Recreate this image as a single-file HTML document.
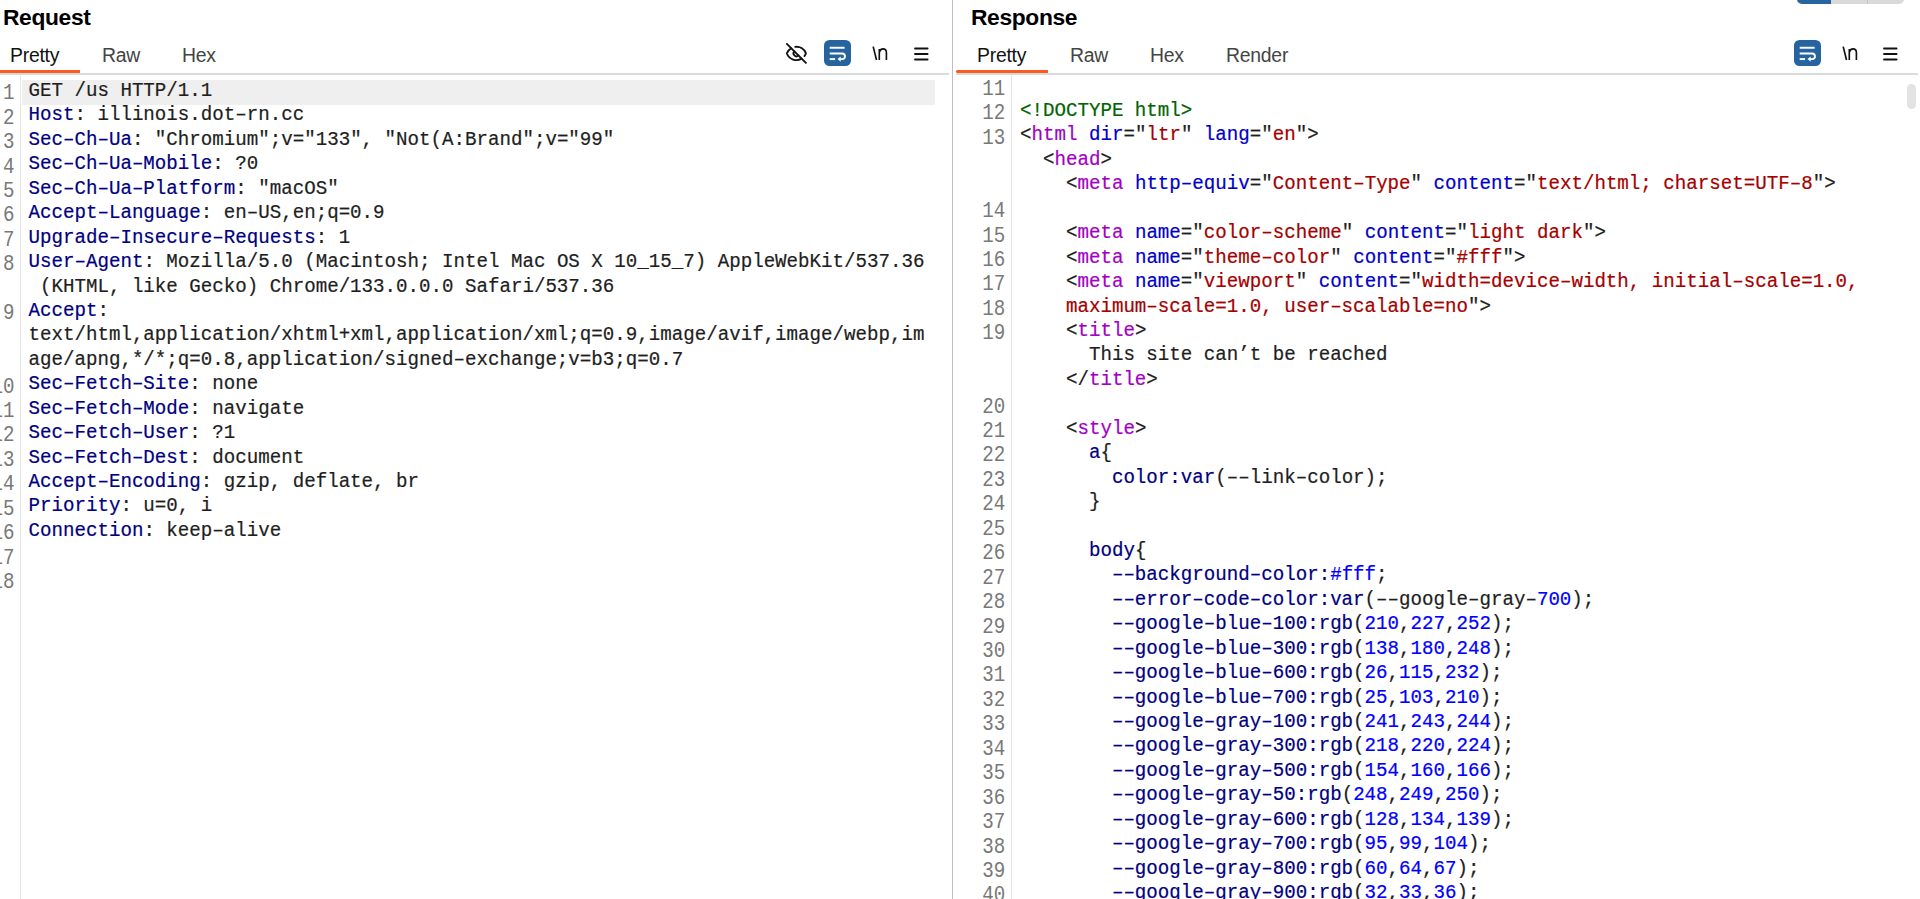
<!DOCTYPE html><html><head><meta charset="utf-8"><style>

html,body{margin:0;padding:0;}
body{width:1920px;height:899px;overflow:hidden;position:relative;background:#fff;}
.abs{position:absolute;}
.row{position:absolute;white-space:pre;transform:scaleY(1.1);transform-origin:0 17.32px;font-family:"Liberation Mono",monospace;font-size:19.15px;line-height:24.44px;height:24.44px;color:#1e1e1e;-webkit-text-stroke:0.2px currentColor;}
.num{position:absolute;white-space:pre;transform:scaleY(1.16);transform-origin:0 17.32px;font-family:"Liberation Mono",monospace;font-size:19.15px;line-height:24.44px;height:24.44px;color:#787878;text-align:right;}
.k{color:#000080;} .t{color:#a300c4;} .a{color:#0000c8;} .v{color:#a50000;} .g{color:#006400;} .n{color:#0000ff;}
.ui{font-family:"Liberation Sans",sans-serif;position:absolute;white-space:pre;}
.title{font-weight:bold;font-size:22.8px;letter-spacing:-0.35px;color:#000;}
.tab{font-size:19.4px;letter-spacing:-0.25px;color:#444;}
.tab.sel{color:#111;}

</style></head><body>
<div class="ui title" style="left:3px;top:4.1px;">Request</div>
<div class="ui tab sel" style="left:10px;top:44px;">Pretty</div>
<div class="ui tab" style="left:102px;top:44px;">Raw</div>
<div class="ui tab" style="left:182px;top:44px;">Hex</div>
<div class="abs" style="left:0;top:73px;width:949px;height:2px;background:#d9dcdd;"></div>
<div class="abs" style="left:0;top:70px;width:80px;height:3px;background:#ff5a1e;"></div>
<div class="abs" style="left:20px;top:75px;width:1px;height:824px;background:#e6e6e6;"></div>
<div class="abs" style="left:22px;top:80px;width:913px;height:24.5px;background:#efefef;"></div>
<div class="row" style="left:28.5px;top:78.98px;">GET /us HTTP/1.1</div>
<div class="row" style="left:28.5px;top:103.42px;"><span class="k">Host</span>: illinois.dot–rn.cc</div>
<div class="row" style="left:28.5px;top:127.86px;"><span class="k">Sec–Ch–Ua</span>: "Chromium";v="133", "Not(A:Brand";v="99"</div>
<div class="row" style="left:28.5px;top:152.30px;"><span class="k">Sec–Ch–Ua–Mobile</span>: ?0</div>
<div class="row" style="left:28.5px;top:176.74px;"><span class="k">Sec–Ch–Ua–Platform</span>: "macOS"</div>
<div class="row" style="left:28.5px;top:201.18px;"><span class="k">Accept–Language</span>: en–US,en;q=0.9</div>
<div class="row" style="left:28.5px;top:225.62px;"><span class="k">Upgrade–Insecure–Requests</span>: 1</div>
<div class="row" style="left:28.5px;top:250.06px;"><span class="k">User–Agent</span>: Mozilla/5.0 (Macintosh; Intel Mac OS X 10_15_7) AppleWebKit/537.36</div>
<div class="row" style="left:28.5px;top:274.50px;"> (KHTML, like Gecko) Chrome/133.0.0.0 Safari/537.36</div>
<div class="row" style="left:28.5px;top:298.94px;"><span class="k">Accept</span>:</div>
<div class="row" style="left:28.5px;top:323.38px;">text/html,application/xhtml+xml,application/xml;q=0.9,image/avif,image/webp,im</div>
<div class="row" style="left:28.5px;top:347.82px;">age/apng,*/*;q=0.8,application/signed–exchange;v=b3;q=0.7</div>
<div class="row" style="left:28.5px;top:372.26px;"><span class="k">Sec–Fetch–Site</span>: none</div>
<div class="row" style="left:28.5px;top:396.70px;"><span class="k">Sec–Fetch–Mode</span>: navigate</div>
<div class="row" style="left:28.5px;top:421.14px;"><span class="k">Sec–Fetch–User</span>: ?1</div>
<div class="row" style="left:28.5px;top:445.58px;"><span class="k">Sec–Fetch–Dest</span>: document</div>
<div class="row" style="left:28.5px;top:470.02px;"><span class="k">Accept–Encoding</span>: gzip, deflate, br</div>
<div class="row" style="left:28.5px;top:494.46px;"><span class="k">Priority</span>: u=0, i</div>
<div class="row" style="left:28.5px;top:518.90px;"><span class="k">Connection</span>: keep–alive</div>
<div class="num" style="right:1905.5px;top:82.28px;">1</div>
<div class="num" style="right:1905.5px;top:106.72px;">2</div>
<div class="num" style="right:1905.5px;top:131.16px;">3</div>
<div class="num" style="right:1905.5px;top:155.60px;">4</div>
<div class="num" style="right:1905.5px;top:180.04px;">5</div>
<div class="num" style="right:1905.5px;top:204.48px;">6</div>
<div class="num" style="right:1905.5px;top:228.92px;">7</div>
<div class="num" style="right:1905.5px;top:253.36px;">8</div>
<div class="num" style="right:1905.5px;top:302.24px;">9</div>
<div class="num" style="right:1905.5px;top:375.56px;">10</div>
<div class="num" style="right:1905.5px;top:400.00px;">11</div>
<div class="num" style="right:1905.5px;top:424.44px;">12</div>
<div class="num" style="right:1905.5px;top:448.88px;">13</div>
<div class="num" style="right:1905.5px;top:473.32px;">14</div>
<div class="num" style="right:1905.5px;top:497.76px;">15</div>
<div class="num" style="right:1905.5px;top:522.20px;">16</div>
<div class="num" style="right:1905.5px;top:546.64px;">17</div>
<div class="num" style="right:1905.5px;top:571.08px;">18</div>
<div class="abs" style="left:951.7px;top:0;width:1.6px;height:899px;background:#c2bebe;"></div>
<div class="ui title" style="left:971px;top:4.1px;">Response</div>
<div class="ui tab sel" style="left:977px;top:44px;">Pretty</div>
<div class="ui tab" style="left:1070px;top:44px;">Raw</div>
<div class="ui tab" style="left:1150px;top:44px;">Hex</div>
<div class="ui tab" style="left:1226px;top:44px;">Render</div>
<div class="abs" style="left:956px;top:73px;width:962px;height:2px;background:#d9dcdd;"></div>
<div class="abs" style="left:956.4px;top:70px;width:91.2px;height:3.2px;border-radius:1.6px 0 0 1.6px;background:#ff5a1e;"></div>
<div class="abs" style="left:1011px;top:75px;width:1px;height:824px;background:#e6e6e6;"></div>
<div class="row" style="left:1020px;top:74.58px;"></div>
<div class="row" style="left:1020px;top:99.02px;"><span class="g">&lt;!DOCTYPE html&gt;</span></div>
<div class="row" style="left:1020px;top:123.46px;">&lt;<span class="t">html</span> <span class="a">dir</span>="<span class="v">ltr</span>" <span class="a">lang</span>="<span class="v">en</span>"&gt;</div>
<div class="row" style="left:1020px;top:147.90px;">  &lt;<span class="t">head</span>&gt;</div>
<div class="row" style="left:1020px;top:172.34px;">    &lt;<span class="t">meta</span> <span class="a">http–equiv</span>="<span class="v">Content–Type</span>" <span class="a">content</span>="<span class="v">text/html; charset=UTF–8</span>"&gt;</div>
<div class="row" style="left:1020px;top:196.78px;"></div>
<div class="row" style="left:1020px;top:221.22px;">    &lt;<span class="t">meta</span> <span class="a">name</span>="<span class="v">color–scheme</span>" <span class="a">content</span>="<span class="v">light dark</span>"&gt;</div>
<div class="row" style="left:1020px;top:245.66px;">    &lt;<span class="t">meta</span> <span class="a">name</span>="<span class="v">theme–color</span>" <span class="a">content</span>="<span class="v">#fff</span>"&gt;</div>
<div class="row" style="left:1020px;top:270.10px;">    &lt;<span class="t">meta</span> <span class="a">name</span>="<span class="v">viewport</span>" <span class="a">content</span>="<span class="v">width=device–width, initial–scale=1.0,</span></div>
<div class="row" style="left:1020px;top:294.54px;">    <span class="v">maximum–scale=1.0, user–scalable=no</span>"&gt;</div>
<div class="row" style="left:1020px;top:318.98px;">    &lt;<span class="t">title</span>&gt;</div>
<div class="row" style="left:1020px;top:343.42px;">      This site can’t be reached</div>
<div class="row" style="left:1020px;top:367.86px;">    &lt;/<span class="t">title</span>&gt;</div>
<div class="row" style="left:1020px;top:392.30px;"></div>
<div class="row" style="left:1020px;top:416.74px;">    &lt;<span class="t">style</span>&gt;</div>
<div class="row" style="left:1020px;top:441.18px;">      <span class="k">a</span>{</div>
<div class="row" style="left:1020px;top:465.62px;">        <span class="k">color:var</span>(––link–color);</div>
<div class="row" style="left:1020px;top:490.06px;">      }</div>
<div class="row" style="left:1020px;top:514.50px;"></div>
<div class="row" style="left:1020px;top:538.94px;">      <span class="k">body</span>{</div>
<div class="row" style="left:1020px;top:563.38px;">        <span class="k">––background–color:</span><span class="n">#fff</span>;</div>
<div class="row" style="left:1020px;top:587.82px;">        <span class="k">––error–code–color:var</span>(––google–gray–<span class="n">700</span>);</div>
<div class="row" style="left:1020px;top:612.26px;">        <span class="k">––google–blue–100:rgb</span>(<span class="n">210</span>,<span class="n">227</span>,<span class="n">252</span>);</div>
<div class="row" style="left:1020px;top:636.70px;">        <span class="k">––google–blue–300:rgb</span>(<span class="n">138</span>,<span class="n">180</span>,<span class="n">248</span>);</div>
<div class="row" style="left:1020px;top:661.14px;">        <span class="k">––google–blue–600:rgb</span>(<span class="n">26</span>,<span class="n">115</span>,<span class="n">232</span>);</div>
<div class="row" style="left:1020px;top:685.58px;">        <span class="k">––google–blue–700:rgb</span>(<span class="n">25</span>,<span class="n">103</span>,<span class="n">210</span>);</div>
<div class="row" style="left:1020px;top:710.02px;">        <span class="k">––google–gray–100:rgb</span>(<span class="n">241</span>,<span class="n">243</span>,<span class="n">244</span>);</div>
<div class="row" style="left:1020px;top:734.46px;">        <span class="k">––google–gray–300:rgb</span>(<span class="n">218</span>,<span class="n">220</span>,<span class="n">224</span>);</div>
<div class="row" style="left:1020px;top:758.90px;">        <span class="k">––google–gray–500:rgb</span>(<span class="n">154</span>,<span class="n">160</span>,<span class="n">166</span>);</div>
<div class="row" style="left:1020px;top:783.34px;">        <span class="k">––google–gray–50:rgb</span>(<span class="n">248</span>,<span class="n">249</span>,<span class="n">250</span>);</div>
<div class="row" style="left:1020px;top:807.78px;">        <span class="k">––google–gray–600:rgb</span>(<span class="n">128</span>,<span class="n">134</span>,<span class="n">139</span>);</div>
<div class="row" style="left:1020px;top:832.22px;">        <span class="k">––google–gray–700:rgb</span>(<span class="n">95</span>,<span class="n">99</span>,<span class="n">104</span>);</div>
<div class="row" style="left:1020px;top:856.66px;">        <span class="k">––google–gray–800:rgb</span>(<span class="n">60</span>,<span class="n">64</span>,<span class="n">67</span>);</div>
<div class="row" style="left:1020px;top:881.10px;">        <span class="k">––google–gray–900:rgb</span>(<span class="n">32</span>,<span class="n">33</span>,<span class="n">36</span>);</div>
<div class="num" style="right:914.8px;top:77.88px;">11</div>
<div class="num" style="right:914.8px;top:102.32px;">12</div>
<div class="num" style="right:914.8px;top:126.76px;">13</div>
<div class="num" style="right:914.8px;top:200.08px;">14</div>
<div class="num" style="right:914.8px;top:224.52px;">15</div>
<div class="num" style="right:914.8px;top:248.96px;">16</div>
<div class="num" style="right:914.8px;top:273.40px;">17</div>
<div class="num" style="right:914.8px;top:297.84px;">18</div>
<div class="num" style="right:914.8px;top:322.28px;">19</div>
<div class="num" style="right:914.8px;top:395.60px;">20</div>
<div class="num" style="right:914.8px;top:420.04px;">21</div>
<div class="num" style="right:914.8px;top:444.48px;">22</div>
<div class="num" style="right:914.8px;top:468.92px;">23</div>
<div class="num" style="right:914.8px;top:493.36px;">24</div>
<div class="num" style="right:914.8px;top:517.80px;">25</div>
<div class="num" style="right:914.8px;top:542.24px;">26</div>
<div class="num" style="right:914.8px;top:566.68px;">27</div>
<div class="num" style="right:914.8px;top:591.12px;">28</div>
<div class="num" style="right:914.8px;top:615.56px;">29</div>
<div class="num" style="right:914.8px;top:640.00px;">30</div>
<div class="num" style="right:914.8px;top:664.44px;">31</div>
<div class="num" style="right:914.8px;top:688.88px;">32</div>
<div class="num" style="right:914.8px;top:713.32px;">33</div>
<div class="num" style="right:914.8px;top:737.76px;">34</div>
<div class="num" style="right:914.8px;top:762.20px;">35</div>
<div class="num" style="right:914.8px;top:786.64px;">36</div>
<div class="num" style="right:914.8px;top:811.08px;">37</div>
<div class="num" style="right:914.8px;top:835.52px;">38</div>
<div class="num" style="right:914.8px;top:859.96px;">39</div>
<div class="num" style="right:914.8px;top:884.40px;">40</div>
<div class="abs" style="left:1907px;top:83.5px;width:8.6px;height:25.3px;border-radius:5px;background:#e3e3e3;"></div>
<div class="abs" style="left:1797px;top:-20px;width:107px;height:24px;border-radius:5px;background:#d9d9d9;overflow:hidden;"><div class="abs" style="left:0;top:0;width:34px;height:24px;background:#2665a0;"></div><div class="abs" style="left:70px;top:0;width:1px;height:24px;background:#c4c4c4;"></div></div>
<svg class="abs" style="left:784.7px;top:41.6px" width="22.8" height="22.8" viewBox="0 0 24 24"><g stroke="#111" stroke-width="1.95" fill="none" stroke-linecap="round" stroke-linejoin="round"><path d="M10.733 5.076a10.744 10.744 0 0 1 11.205 6.575 1 1 0 0 1 0 .696 10.747 10.747 0 0 1-1.444 2.49"/><path d="M14.084 14.158a3 3 0 0 1-4.242-4.242"/><path d="M17.479 17.499a10.75 10.75 0 0 1-15.417-5.151 1 1 0 0 1 0-.696 10.75 10.75 0 0 1 4.446-5.143"/><path d="m2 2 20 20"/></g></svg>
<div class="abs" style="left:824px;top:40px;width:27.1px;height:26px;border-radius:5.5px;background:#2664a0;"><svg width="27" height="26" viewBox="0 0 27 26" style="position:absolute;left:0;top:0"><g stroke="#fff" stroke-width="1.95" stroke-linecap="butt" fill="none"><path d="M5.7 7.75 H20.6"/><path d="M5.7 13.4 H18.1 A2.85 2.85 0 0 1 18.1 19.1 H16.0"/><path d="M5.7 19.1 H11.1"/></g><path d="M13.6 19.1 L16.7 16.5 V21.7 Z" fill="#fff"/></svg></div>
<svg class="abs" style="left:872px;top:46px" width="18" height="16" viewBox="0 0 18 16"><g stroke="#111" stroke-width="1.65" fill="none" stroke-linecap="butt"><path d="M1.2 0.6 L4.5 14"/><path d="M7.3 2.9 V14 M7.3 6.2 Q8.2 2.9 11 2.9 Q14.4 2.9 14.4 6.6 V14"/></g></svg>
<svg class="abs" style="left:913.5px;top:46.5px" width="16" height="14" viewBox="0 0 16 14"><g stroke="#111" stroke-width="1.8" stroke-linecap="round"><line x1="1" y1="1.5" x2="13.6" y2="1.5"/><line x1="1" y1="7" x2="13.6" y2="7"/><line x1="1" y1="12.5" x2="13.6" y2="12.5"/></g></svg>
<div class="abs" style="left:1794px;top:40px;width:27.1px;height:26px;border-radius:5.5px;background:#2664a0;"><svg width="27" height="26" viewBox="0 0 27 26" style="position:absolute;left:0;top:0"><g stroke="#fff" stroke-width="1.95" stroke-linecap="butt" fill="none"><path d="M5.7 7.75 H20.6"/><path d="M5.7 13.4 H18.1 A2.85 2.85 0 0 1 18.1 19.1 H16.0"/><path d="M5.7 19.1 H11.1"/></g><path d="M13.6 19.1 L16.7 16.5 V21.7 Z" fill="#fff"/></svg></div>
<svg class="abs" style="left:1841.5px;top:46.3px" width="18" height="16" viewBox="0 0 18 16"><g stroke="#111" stroke-width="1.65" fill="none" stroke-linecap="butt"><path d="M1.2 0.6 L4.5 14"/><path d="M7.3 2.9 V14 M7.3 6.2 Q8.2 2.9 11 2.9 Q14.4 2.9 14.4 6.6 V14"/></g></svg>
<svg class="abs" style="left:1882.5px;top:46.5px" width="16" height="14" viewBox="0 0 16 14"><g stroke="#111" stroke-width="1.8" stroke-linecap="round"><line x1="1" y1="1.5" x2="13.6" y2="1.5"/><line x1="1" y1="7" x2="13.6" y2="7"/><line x1="1" y1="12.5" x2="13.6" y2="12.5"/></g></svg>
</body></html>
